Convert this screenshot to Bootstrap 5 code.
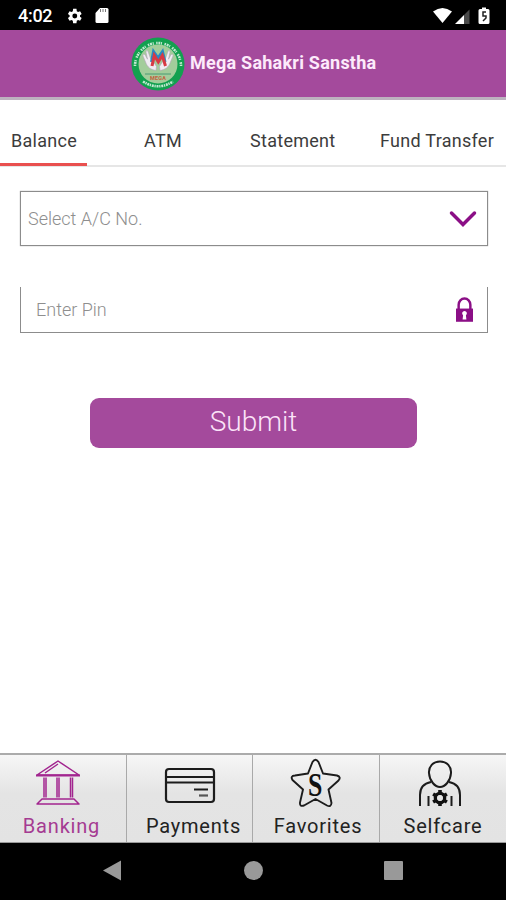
<!DOCTYPE html>
<html lang="en">
<head>
<meta charset="utf-8">
<meta name="viewport" content="width=device-width, initial-scale=1">
<title>Mega Sahakri Sanstha</title>
<link href="https://cdn.jsdelivr.net/npm/bootstrap@5.3.0/dist/css/bootstrap.min.css" rel="stylesheet">
<style>
body{font-family:Roboto,"Liberation Sans",sans-serif;width:506px;height:900px;background:#fff;overflow:hidden}
svg{display:block;flex:none}
.status{height:30px;background:#000;padding:1px 15px 0 18px}
.clock{font-size:18px;line-height:28px;font-weight:500;letter-spacing:-.3px;color:#fff;width:48px;padding-top:1px}
.sdcard{margin-left:13px}
.brandbar{height:70px;background:#a44a9c;border-bottom:3px solid #bdb2bf;padding-left:131px}
.brandname{font-size:18px;font-weight:700;letter-spacing:.24px;color:#fdeafb;margin-left:5px;line-height:24px;white-space:nowrap;padding-bottom:2px}
.tabs{height:67px;border-bottom:2px solid #e6e6e6}
.tab{font-size:18px;letter-spacing:.28px;line-height:24px;color:#3c3c3c;height:66px;padding-top:29px;white-space:nowrap;margin-bottom:-2px}
.tab-bal{width:87px;padding-left:11px;border-bottom:3px solid #e9504f}
.tab-atm{width:106px;margin-left:57px}
.tab-st{width:130px}
.fields{padding:24px 18px 0 20px}
.acct{height:55px;border:1px solid #8c8c8c;box-shadow:0 0 1px #999;padding:0 9px 0 7px;font-size:18px;color:#8e8e8e;font-weight:300}
.pin{height:46px;margin-top:41px;border:1px solid #8c8c8c;border-top:0;padding:0 14px 0 15px;font-size:18px;color:#8e8e8e;font-weight:300}
.acct span,.pin span{margin-top:-1px}
.submit{width:327px;height:50px;margin:65px 0 0 90px;background:#a44a9c;border-radius:9px;border:0;color:#fbe3f8;font-size:28px;font-weight:300;line-height:30px;padding:0 0 2px}
.submit:hover{background:#a44a9c;color:#fff}
.dock{height:90px;border-top:2px solid #ababab;border-bottom:1px solid #999;background:linear-gradient(#f6f6f6,#e4e4e4 45%,#e3e3e3)}
.dock-item{border-right:1px solid #a9a9a9;font-size:20px;line-height:24px;letter-spacing:.8px;color:#222;text-decoration:none;white-space:nowrap;padding-top:3px}
.dock-item:last-child{border-right:0}
.dock-item svg{margin-bottom:6px}
.dock-item.current{color:#a53b92}
.dock-item:nth-child(1){width:127px;padding-right:10px}
.dock-item:nth-child(2){width:126px}
.dock-item:nth-child(3){width:127px}
.dock-item:nth-child(4){width:126px;padding-right:6px}
.dock-item:nth-child(1) span{padding-left:7px}
.dock-item:nth-child(2) span{padding-left:8px}
.dock-item:nth-child(3) span{padding-left:4px}
.dock-item:nth-child(4) span{padding-left:6px}
.sysnav{height:57px;background:#000}
</style>
</head>
<body class="d-flex flex-column m-0">
<header>
  <div class="status d-flex align-items-center">
    <span class="clock">4:02</span>
    <svg width="16" height="16" viewBox="0 0 24 24"><path fill="#fff" fill-rule="evenodd" d="M21 13.100v-2.200l2.500-2-2.400-4.200-3 1.200-1.900-1.100L15.700 1h-5l-.5 3.800-1.900 1.100-3-1.200-2.400 4.200 2.500 2v2.200l-2.500 2 2.400 4.200 3-1.200 1.900 1.100.5 3.800h5l.5-3.800 1.900-1.100 3 1.200 2.400-4.200zM13.200 8.300a3.700 3.700 0 1 1-.01 7.400 3.700 3.700 0 0 1 .01-7.400z"/></svg>
    <svg class="sdcard" width="14" height="17" viewBox="0 0 14 17"><path fill="#fff" d="M5 1h7q1.500 0 1.500 1.500v12q0 1.500-1.500 1.500H2Q.5 16 .5 14.500V6z"/><path stroke="#777" stroke-width="1" d="M5.500 2v3M8 2v3M10.500 2v3"/></svg>
    <svg class="ms-auto" width="60" height="18" viewBox="0 0 60 18"><path fill="#fff" d="M2 4.500Q11.500 -2.500 21 4.500L11.500 16z"/><path fill="#fff" d="M24 17 33 8V17z"/><path fill="#4a4a4a" d="M33 8 38.500 2.500v14.500H33z"/><path fill="#fff" d="M49 2h2V.5h4V2h2q1.500 0 1.500 1.500v12q0 1.500-1.500 1.500h-8q-1.500 0-1.500-1.500v-12Q47.500 2 49 2z"/><path fill="none" stroke="#222" stroke-width="1.500" d="M55 5h-3v4h3v2l-3 3"/></svg>
  </div>
  <div class="brandbar d-flex align-items-center">
    <svg width="54" height="54" viewBox="0 0 54 54">
      <circle cx="27" cy="27" r="26.500" fill="#12a04f"/><circle cx="27" cy="27" r="19.500" fill="#a3cd9b"/>
      <path d="M4 29A23 23 0 0 1 50 29" fill="none" stroke="#c4e8d2" stroke-width="2.600" stroke-dasharray="1.500 .8 2 .7 1 2.500"/>
      <path d="M12 44.500Q27 54 42 44.500" fill="none" stroke="#c4e8d2" stroke-width="2.600" stroke-dasharray="2 .7 1.300 .8"/>
      <path d="M25 33.500c-5.500-1-8.500-3-10.500-8.500L12 19c-.5-2 1.500-2.500 2.300-.8l2.200 4-1.500-7c-.2-2 1.700-2.200 2.200-.4l2.300 6.700 3.500 4 2.500 4zM29 33.500c5.500-1 8.500-3 10.500-8.500L42 19c.5-2-1.500-2.500-2.300-.8l-2.200 4 1.500-7c.2-2-1.700-2.200-2.200-.4l-2.300 6.700-3.500 4-2.500 4z" fill="#f0edf2" stroke="#b3a3b8" stroke-width=".6"/>
      <path d="M20.500 25 22.500 14.500 27 21l4.500-6.500L34 25" fill="none" stroke="#2889c4" stroke-width="3"/>
      <path d="M21 29 23.300 18.500l4 6.500 4-6.500L34.500 29" fill="none" stroke="#d83a43" stroke-width="3"/>
      <path d="M14 37h26" stroke="#4b9b72" stroke-width="1"/>
      <text x="27" y="43" text-anchor="middle" font-size="5.500" font-weight="700" textLength="16" fill="#c4613e">MEGA</text>
    </svg>
    <span class="brandname">Mega Sahakri Sanstha</span>
  </div>
</header>
<nav class="tabs d-flex">
  <div class="tab tab-bal">Balance</div><div class="tab tab-atm">ATM</div><div class="tab tab-st">Statement</div><div class="tab">Fund Transfer</div>
</nav>
<main class="flex-grow-1">
  <div class="fields">
    <div class="acct d-flex align-items-center justify-content-between"><span>Select A/C No.</span>
      <svg width="30" height="20" viewBox="0 0 30 20"><path fill="none" stroke="#8b0f86" stroke-width="3.500" stroke-linecap="round" d="M3.500 4 15 15.500 26.500 4"/></svg></div>
    <div class="pin d-flex align-items-center justify-content-between"><span>Enter Pin</span>
      <svg width="17" height="25" viewBox="0 0 18 26"><path fill="none" stroke="#8b0f86" stroke-width="2.600" d="M2.800 13V8a6.200 6.600 0 0 1 12.400 0v5"/><path fill="#8b0f86" d="M0 12h18v14H0z"/><path fill="#fff" d="M9 14.500a2.500 2.500 0 0 1 1.500 4.500l.5 4.500H7l.5-4.500A2.500 2.500 0 0 1 9 14.500z"/></svg></div>
  </div>
  <button class="submit btn" type="button">Submit</button>
</main>
<nav class="dock d-flex">
  <a class="dock-item current d-flex flex-column align-items-center" href="#">
    <svg width="48" height="50" viewBox="0 0 48 50"><g fill="none" stroke="#a2258f" stroke-width="1.500" stroke-linejoin="round"><path d="M24 3 3 17h42zM24 6 11 15M10 19.500v20M12 19.500v20M23 19.500v20M25 19.500v20M36.500 19.500v20M38.500 19.500v20M8 41h32l5 5H3z"/></g><path stroke="#a2258f" stroke-width="2" d="M2 17.500h44"/></svg>
    <span>Banking</span></a>
  <a class="dock-item d-flex flex-column align-items-center" href="#">
    <svg width="52" height="50" viewBox="0 0 52 50"><g fill="none" stroke="#1c1c1c" stroke-width="2.200"><rect x="2" y="11" width="48" height="33" rx="3"/><path d="M2 19h48M2 24.500h48M30 31.500h14"/><path stroke="#555" d="M35 37.500h9"/></g></svg>
    <span>Payments</span></a>
  <a class="dock-item d-flex flex-column align-items-center" href="#">
    <svg width="52" height="50" viewBox="0 0 52 50"><path fill="none" stroke="#1c1c1c" stroke-width="1.900" stroke-linejoin="round" d="M22.500 4Q25.500-.5 28.500 4L33 15.500 47 17.500Q51.500 19 48.500 22.500L38.500 31.500 41.500 45Q41 49.500 37 47.500L25.500 41 14 47.500Q9.500 49 10 44.500L13 31.500 2.500 22Q0 18 5 17.500L18 15.500z"/><text x="25.500" y="37.500" text-anchor="middle" font-family="Liberation Serif,serif" font-weight="700" font-size="34" textLength="15" lengthAdjust="spacingAndGlyphs" fill="#111">S</text></svg>
    <span>Favorites</span></a>
  <a class="dock-item d-flex flex-column align-items-center" href="#">
    <svg width="44" height="50" viewBox="0 0 44 50"><g fill="none" stroke="#1c1c1c" stroke-width="2"><path d="M22 3.500c7 0 11.500 5 11 11.500-.5 8-6 14-11 14S11.500 23 11 15C10.500 8.500 15 3.500 22 3.500zM2 48V37Q2 26 13 24M42 48V37Q42 26 31 24M10.500 38v10M33.500 38v10"/></g><g stroke="#111" fill="none"><circle cx="22" cy="40" r="4.600" stroke-width="3.400"/><path stroke-width="3.600" d="M22 36.500v-4.500M22 43.500v4.500M25 38.250l3.900-2.250M19 41.750l-3.900 2.250M25 41.750l3.900 2.250M19 38.250l-3.900-2.250"/></g><circle cx="22" cy="40" r="2.800" fill="#e5e5e5"/></svg>
    <span>Selfcare</span></a>
</nav>
<footer class="sysnav d-flex justify-content-center">
  <svg width="506" height="57" viewBox="0 0 506 57"><g fill="#999"><path d="M103 27.500 121 17.500V37.500z"/><circle cx="253.500" cy="27.500" r="9.500"/><rect x="384" y="18" width="19" height="19" rx="1"/></g></svg>
</footer>
<script src="https://cdn.jsdelivr.net/npm/bootstrap@5.3.0/dist/js/bootstrap.bundle.min.js"></script>
</body>
</html>
